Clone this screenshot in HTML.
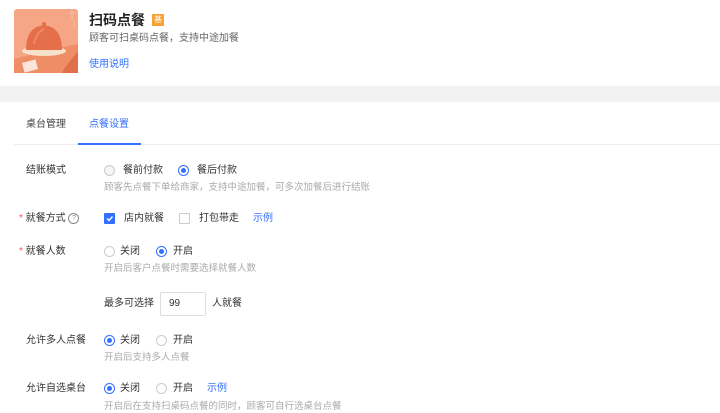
<!DOCTYPE html><html><head><meta charset="utf-8"><style>
body{margin:0;width:720px;height:412px;overflow:hidden;background:#fff;font-family:"Liberation Sans","Noto Sans CJK SC",sans-serif;font-size:10px;color:#333;position:relative}
.a{position:absolute;white-space:nowrap;line-height:12px}
.g{color:#aaa;font-size:9.5px}
.b{color:#3370ff}
.r{position:absolute;width:11px;height:11px;border:1px solid #ccc;border-radius:50%;box-sizing:border-box}
.r.on{border-color:#3370ff}
.r.on:after{content:"";position:absolute;left:2px;top:2px;width:5px;height:5px;border-radius:50%;background:#3370ff}
.c{position:absolute;width:11px;height:11px;border:1px solid #ccc;box-sizing:border-box;border-radius:1px}
.s{color:#f5564a}
</style></head><body>
<div style="position:absolute;left:0;top:86px;width:720px;height:16px;background:#f2f2f2"></div>
<svg style="position:absolute;left:14px;top:9px" width="64" height="64" viewBox="0 0 64 64">
<rect width="64" height="64" rx="3" fill="#f6a684"/>
<path d="M0 50 L40 40 L64 35 L64 64 L0 64Z" fill="#ee8d66"/>
<path d="M50 60 L64 42 L64 64 L48 64Z" fill="#e0704a"/>
<ellipse cx="30" cy="42" rx="22" ry="5" fill="#f7e1c8"/>
<path d="M12 41 Q12 18 30 16 Q48 18 48 41Z" fill="#e56f4b"/>
<path d="M20 35 Q22 24 30 20" stroke="#f08a66" stroke-width="2" fill="none"/>
<circle cx="30" cy="15" r="2" fill="#e56f4b"/>
<path d="M58 0 L58 10 Q62 14 60 18 M55 4 L62 4" stroke="#f3b79c" stroke-width="1.5" fill="none"/>
<rect x="9" y="52" width="14" height="10" fill="#fbe4da" transform="rotate(-15 16 57)"/>
</svg>
<div class="a" style="left:89px;top:12px;font-size:14px;line-height:17px;font-weight:bold;color:#222">扫码点餐</div>
<div class="a" style="left:152px;top:14px;width:12px;height:12px;background:#f7a233;color:#fff;font-size:8px;text-align:center;line-height:12px">基</div>
<div class="a" style="left:89px;top:33px;color:#666">顾客可扫桌码点餐，支持中途加餐</div>
<div class="a b" style="left:89px;top:59px">使用说明</div>
<div class="a" style="left:26px;top:119px;color:#444">桌台管理</div>
<div class="a b" style="left:89px;top:119px">点餐设置</div>
<div style="position:absolute;left:14px;top:144px;width:706px;height:1px;background:#eee"></div>
<div style="position:absolute;left:78px;top:143px;width:63px;height:2px;background:#3370ff"></div>

<div class="a" style="left:26px;top:165px">结账模式</div>
<div class="r" style="left:104px;top:165px;background:#f5f5f5"></div><div class="a" style="left:123px;top:165px">餐前付款</div>
<div class="r on" style="left:178px;top:165px"></div><div class="a" style="left:197px;top:165px">餐后付款</div>
<div class="a g" style="left:104px;top:182px">顾客先点餐下单给商家，支持中途加餐，可多次加餐后进行结账</div>

<div class="a" style="left:19px;top:213px"><span class="s">*</span> 就餐方式 <span style="display:inline-block;width:9px;height:9px;border:1px solid #888;border-radius:50%;font-size:7px;line-height:9px;text-align:center;color:#888;vertical-align:1px">?</span></div>
<div class="c" style="left:104px;top:213px;background:#3370ff;border-color:#3370ff"><svg width="9" height="9" style="position:absolute;left:0;top:0"><path d="M2 4.5L4 6.5L7.5 2.5" stroke="#fff" stroke-width="1.4" fill="none"/></svg></div>
<div class="a" style="left:124px;top:213px">店内就餐</div>
<div class="c" style="left:179px;top:213px"></div><div class="a" style="left:199px;top:213px">打包带走</div>
<div class="a b" style="left:253px;top:213px">示例</div>

<div class="a" style="left:19px;top:246px"><span class="s">*</span> 就餐人数</div>
<div class="r" style="left:104px;top:246px"></div><div class="a" style="left:120px;top:246px">关闭</div>
<div class="r on" style="left:156px;top:246px"></div><div class="a" style="left:173px;top:246px">开启</div>
<div class="a g" style="left:104px;top:263px">开启后客户点餐时需要选择就餐人数</div>

<div class="a" style="left:104px;top:298px">最多可选择</div>
<div style="position:absolute;left:160px;top:292px;width:46px;height:24px;border:1px solid #ddd;border-radius:2px;box-sizing:border-box;padding:5px 8px;line-height:12px">99</div>
<div class="a" style="left:212px;top:298px">人就餐</div>

<div class="a" style="left:26px;top:335px">允许多人点餐</div>
<div class="r on" style="left:104px;top:335px"></div><div class="a" style="left:120px;top:335px">关闭</div>
<div class="r" style="left:156px;top:335px"></div><div class="a" style="left:173px;top:335px">开启</div>
<div class="a g" style="left:104px;top:352px">开启后支持多人点餐</div>

<div class="a" style="left:26px;top:383px">允许自选桌台</div>
<div class="r on" style="left:104px;top:383px"></div><div class="a" style="left:120px;top:383px">关闭</div>
<div class="r" style="left:156px;top:383px"></div><div class="a" style="left:173px;top:383px">开启</div>
<div class="a b" style="left:207px;top:383px">示例</div>
<div class="a g" style="left:104px;top:401px">开启后在支持扫桌码点餐的同时，顾客可自行选桌台点餐</div>
</body></html>
